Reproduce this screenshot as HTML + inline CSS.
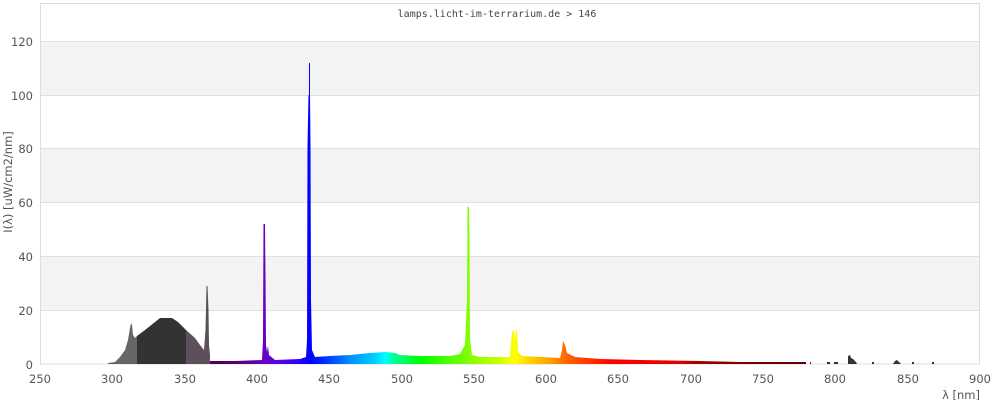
<!DOCTYPE html>
<html><head><meta charset="utf-8"><style>
html,body{margin:0;padding:0;background:#fff;}
svg text{font-family:"DejaVu Sans","Liberation Sans",sans-serif;font-size:11.5px;fill:#555;}
</style></head><body>
<svg width="1000" height="400" viewBox="0 0 1000 400" xmlns="http://www.w3.org/2000/svg">
<defs>
<linearGradient id="g" gradientUnits="userSpaceOnUse" x1="205" y1="0" x2="806" y2="0">
<stop offset="0" stop-color="#4a0048"/>
<stop offset="0.05" stop-color="#5a0070"/>
<stop offset="0.098" stop-color="#6a00c0"/>
<stop offset="0.125" stop-color="#5a00e8"/>
<stop offset="0.158" stop-color="#2a00ff"/>
<stop offset="0.175" stop-color="#0000ff"/>
<stop offset="0.208" stop-color="#0040ff"/>
<stop offset="0.241" stop-color="#0090ff"/>
<stop offset="0.283" stop-color="#00d0ff"/>
<stop offset="0.300" stop-color="#00ffff"/>
<stop offset="0.316" stop-color="#00ff90"/>
<stop offset="0.358" stop-color="#00ff00"/>
<stop offset="0.416" stop-color="#60ff00"/>
<stop offset="0.438" stop-color="#80ff00"/>
<stop offset="0.491" stop-color="#d0ff00"/>
<stop offset="0.516" stop-color="#ffff00"/>
<stop offset="0.541" stop-color="#ffd000"/>
<stop offset="0.574" stop-color="#ffa000"/>
<stop offset="0.596" stop-color="#ff7000"/>
<stop offset="0.641" stop-color="#ff3000"/>
<stop offset="0.674" stop-color="#ff0000"/>
<stop offset="0.790" stop-color="#e00000"/>
<stop offset="0.824" stop-color="#a00000"/>
<stop offset="0.92" stop-color="#700000"/>
<stop offset="1" stop-color="#600000"/>
</linearGradient>
</defs>
<rect x="40" y="3" width="940" height="361" fill="#fff"/>
<rect x="40" y="41" width="940" height="54" fill="#f3f3f3"/>
<rect x="40" y="149" width="940" height="53" fill="#f3f3f3"/>
<rect x="40" y="256" width="940" height="54" fill="#f3f3f3"/>
<g stroke="#e0e0e0" stroke-width="1">
<line x1="40" y1="41.5" x2="980" y2="41.5"/>
<line x1="40" y1="95.5" x2="980" y2="95.5"/>
<line x1="40" y1="148.5" x2="980" y2="148.5"/>
<line x1="40" y1="202.5" x2="980" y2="202.5"/>
<line x1="40" y1="256.5" x2="980" y2="256.5"/>
<line x1="40" y1="310.5" x2="980" y2="310.5"/>
</g>
<rect x="40.5" y="3.5" width="939" height="360.5" fill="none" stroke="#ddd"/>
<polygon fill="#666" points="108,364 108,363 115,362 120,357 125,350 128,340 130,328 131,323 132,325 133,335 135,338 137,336 137,364"/>
<polygon fill="#333" points="137,364 137,336 145,330 155,322 160,318 172,318 178,322 186,330 186,364"/>
<polygon fill="#5c505c" points="186,364 186,330 195,338 200,345 204,350 205.5,330 206.5,286 207.5,286 208.5,310 209,345 210,355 210,364"/>
<polygon fill="url(#g)" points="210,364 210,361 235,361 262,360 263,340 263.5,224 265,224 265.5,275 266,345 267,352 268,346 269,355 275,360 300,359 306,357 307,340 307.5,145 308.5,95 309,95 309,63 310,63 310,95 310.5,145 311,300 312,350 315,357 330,356 350,355 370,353 385,352 395,353 400,355 420,356 450,356 460,354 465,345 467,300 467.5,207 469,207 469.5,240 470,340 472,355 480,357 510,357 512,332 514,330 515,340 516,328 517,332 518,352 522,356 560,358 562,350 563,341 565,345 567,353 575,357 600,359 640,360 700,361 740,362 806,362 806,364"/>
<g fill="#333">
<polygon points="848,364 848,356 850,355 851,358 853,359 856,362 857,364"/>
<polygon points="893,364 895,361 897,360 899,362 901,364"/>
<rect x="834" y="362" width="4" height="2"/>
<rect x="872" y="362" width="2" height="2"/>
<rect x="912" y="362" width="2" height="2"/>
<rect x="932" y="362" width="2" height="2"/>
<rect x="827" y="362" width="3" height="2"/>
<rect x="810" y="362" width="1" height="2"/>
</g>
<text x="497" y="17" text-anchor="middle" style="font-family:'DejaVu Sans Mono','Liberation Mono',monospace;font-size:10px;fill:#444">lamps.licht-im-terrarium.de &gt; 146</text>
<g text-anchor="end">
<text x="33" y="46">120</text>
<text x="33" y="100">100</text>
<text x="33" y="153">80</text>
<text x="33" y="207">60</text>
<text x="33" y="261">40</text>
<text x="33" y="315">20</text>
<text x="33" y="369">0</text>
</g>
<g text-anchor="middle">
<text x="40" y="383">250</text>
<text x="112" y="383">300</text>
<text x="185" y="383">350</text>
<text x="257" y="383">400</text>
<text x="329" y="383">450</text>
<text x="402" y="383">500</text>
<text x="474" y="383">550</text>
<text x="546" y="383">600</text>
<text x="618" y="383">650</text>
<text x="691" y="383">700</text>
<text x="763" y="383">750</text>
<text x="835" y="383">800</text>
<text x="908" y="383">850</text>
<text x="980" y="383">900</text>
</g>
<text x="980" y="399" text-anchor="end">λ [nm]</text>
<text transform="translate(12,182) rotate(-90)" text-anchor="middle">I(λ)  [uW/cm2/nm]</text>
</svg>
</body></html>
